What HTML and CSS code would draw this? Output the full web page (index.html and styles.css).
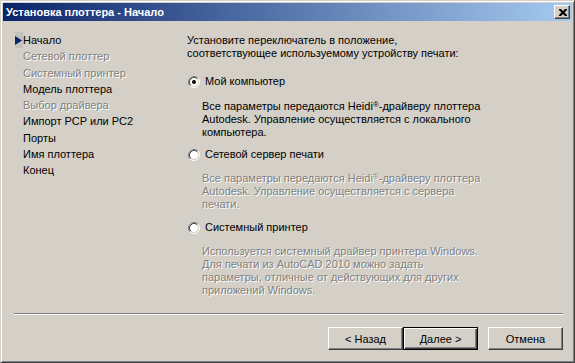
FILE: index.html
```html
<!DOCTYPE html>
<html lang="ru">

<head>
    <meta charset="UTF-8" />
    <title>Установка плоттера - Начало</title>
    <link rel="stylesheet" href="styles.css">
</head>

<body>
    <div class="window">
        <div class="titlebar">
            <span class="title">Установка плоттера - Начало</span>
            <button class="close" aria-label="Закрыть">
                <svg width="8" height="7" viewBox="0 0 8 7">
                    <path d="M0 0h2l2 2 2-2h2v1l-2.5 2.5L8 6v1H6L4 5 2 7H0V6l2.5-2.5L0 1z" fill="#000" />
                </svg>
            </button>
        </div>

        <div class="body">
            <ul class="steps">
                <li class="step current">
                    <span class="marker">
                        <svg width="7" height="9" viewBox="0 0 7 9"><path d="M0 0L7 4.5L0 9z" fill="#0a246a" /></svg>
                    </span>Начало
                </li>
                <li class="step disabled"><span class="marker"></span>Сетевой плоттер</li>
                <li class="step disabled"><span class="marker"></span>Системный принтер</li>
                <li class="step"><span class="marker"></span>Модель плоттера</li>
                <li class="step disabled"><span class="marker"></span>Выбор драйвера</li>
                <li class="step"><span class="marker"></span>Импорт PCP или PC2</li>
                <li class="step"><span class="marker"></span>Порты</li>
                <li class="step"><span class="marker"></span>Имя плоттера</li>
                <li class="step"><span class="marker"></span>Конец</li>
            </ul>

            <div class="content">
                <p class="intro">Установите переключатель в положение,<br>соответствующее используемому устройству печати:</p>

                <label class="radio-row first">
                    <svg class="radio" width="12" height="12" viewBox="0 0 12 12">
                        <circle cx="6" cy="6" r="4.5" fill="#fff" />
                        <path d="M2.11 9.89A5.5 5.5 0 0 1 9.89 2.11" stroke="#808080" fill="none" />
                        <path d="M9.89 2.11A5.5 5.5 0 0 1 2.11 9.89" stroke="#fff" fill="none" />
                        <path d="M2.82 9.18A4.5 4.5 0 0 1 9.18 2.82" stroke="#404040" fill="none" />
                        <path d="M9.18 2.82A4.5 4.5 0 0 1 2.82 9.18" stroke="#d4d0c8" fill="none" />
                        <circle cx="6" cy="6" r="2" fill="#000" />
                    </svg>
                    Мой компьютер
                </label>
                <p class="desc desc-local">Все параметры передаются Heidi<sup>®</sup>-драйверу плоттера<br>Autodesk. Управление осуществляется с локального<br>компьютера.</p>

                <label class="radio-row second">
                    <svg class="radio" width="12" height="12" viewBox="0 0 12 12">
                        <circle cx="6" cy="6" r="4.5" fill="#fff" />
                        <path d="M2.11 9.89A5.5 5.5 0 0 1 9.89 2.11" stroke="#808080" fill="none" />
                        <path d="M9.89 2.11A5.5 5.5 0 0 1 2.11 9.89" stroke="#fff" fill="none" />
                        <path d="M2.82 9.18A4.5 4.5 0 0 1 9.18 2.82" stroke="#404040" fill="none" />
                        <path d="M9.18 2.82A4.5 4.5 0 0 1 2.82 9.18" stroke="#d4d0c8" fill="none" />
                    </svg>
                    Сетевой сервер печати
                </label>
                <p class="desc disabled desc-server">Все параметры передаются Heidi<sup>®</sup>-драйверу плоттера<br>Autodesk. Управление осуществляется с сервера<br>печати.</p>

                <label class="radio-row third">
                    <svg class="radio" width="12" height="12" viewBox="0 0 12 12">
                        <circle cx="6" cy="6" r="4.5" fill="#fff" />
                        <path d="M2.11 9.89A5.5 5.5 0 0 1 9.89 2.11" stroke="#808080" fill="none" />
                        <path d="M9.89 2.11A5.5 5.5 0 0 1 2.11 9.89" stroke="#fff" fill="none" />
                        <path d="M2.82 9.18A4.5 4.5 0 0 1 9.18 2.82" stroke="#404040" fill="none" />
                        <path d="M9.18 2.82A4.5 4.5 0 0 1 2.82 9.18" stroke="#d4d0c8" fill="none" />
                    </svg>
                    Системный принтер
                </label>
                <p class="desc disabled desc-system">Используется системный драйвер принтера Windows.<br>Для печати из AutoCAD 2010 можно задать<br>параметры, отличные от действующих для других<br>приложений Windows.</p>
            </div>
        </div>

        <div class="footer">
            <div class="separator"></div>
            <div class="buttons">
                <button class="btn">&lt; Назад</button>
                <button class="btn btn-default">Далее &gt;</button>
                <button class="btn btn-cancel">Отмена</button>
            </div>
        </div>
    </div>
</body>
</html>
```

FILE: styles.css
```css
:root {
    --face: #d4d0c8;
    --shadow: #808080;
    --dark: #404040;
    --light: #ffffff;
    --navy: #0a246a;
    --sky: #a6caf0;
}

* {
    margin: 0;
    padding: 0;
    box-sizing: border-box;
}

body {
    font-family: 'Liberation Sans', Arial, sans-serif;
    font-size: 11px;
    color: #000;
    background: var(--face);
}

.window {
    width: 575px;
    height: 363px;
    display: flex;
    flex-direction: column;
    padding: 2px;
    background: var(--face);
    border: 1px solid;
    border-color: var(--face) var(--dark) var(--dark) var(--face);
    box-shadow: inset 1px 1px var(--light), inset -1px -1px var(--shadow);
}

.titlebar {
    height: 18px;
    display: flex;
    align-items: center;
    justify-content: space-between;
    padding: 0 2px 0 3px;
    background: linear-gradient(to right, var(--navy), var(--sky));
}

.title {
    color: #fff;
    font-weight: 700;
    font-size: 11px;
}

.close {
    width: 16px;
    height: 14px;
    display: flex;
    align-items: center;
    justify-content: center;
    padding-left: 1px;
    background: var(--face);
    border: 1px solid;
    border-color: var(--light) var(--dark) var(--dark) var(--light);
    box-shadow: inset -1px -1px var(--shadow);
}

.body {
    flex: 1;
    display: grid;
    grid-template-columns: 184px 1fr;
}

.steps {
    list-style: none;
    padding: 11px 0 0 12px;
}

.step {
    display: flex;
    align-items: center;
    height: 16.25px;
    line-height: 16px;
}

.marker {
    width: 8px;
    height: 16px;
    display: flex;
    align-items: center;
}

.current .marker {
    background: #c4c1ba;
}

.disabled {
    color: var(--shadow);
    text-shadow: 1px 1px 0 var(--light);
}

.content {
    padding-top: 13px;
    line-height: 13px;
}

.radio-row {
    display: flex;
    align-items: center;
    gap: 5px;
    height: 13px;
    padding-left: 1px;
}

.radio-row.first {
    margin-top: 15px;
}

.radio-row.second {
    margin-top: 9px;
}

.radio-row.third {
    margin-top: 10px;
}

.desc {
    padding-left: 15px;
}

.desc-local {
    margin-top: 12px;
}

.desc-server,
.desc-system {
    margin-top: 11px;
}

.desc sup {
    font-size: 8px;
    line-height: 0;
    vertical-align: 3px;
}

.footer {
    height: 47px;
}

.separator {
    margin: 0 9px 0 11px;
    border-top: 1px solid var(--shadow);
    border-bottom: 1px solid var(--light);
}

.buttons {
    display: flex;
    justify-content: flex-end;
    padding: 12px 9px 0 0;
}

.btn {
    width: 75px;
    height: 23px;
    font-family: inherit;
    font-size: 11px;
    color: #000;
    background: var(--face);
    border: 1px solid;
    border-color: var(--light) var(--dark) var(--dark) var(--light);
    box-shadow: inset -1px -1px var(--shadow);
}

.btn-default {
    border: 1px solid #000;
    box-shadow: inset 1px 1px var(--light), inset -1px -1px var(--dark), inset -2px -2px var(--shadow);
}

.btn-cancel {
    margin-left: 10px;
}
```
